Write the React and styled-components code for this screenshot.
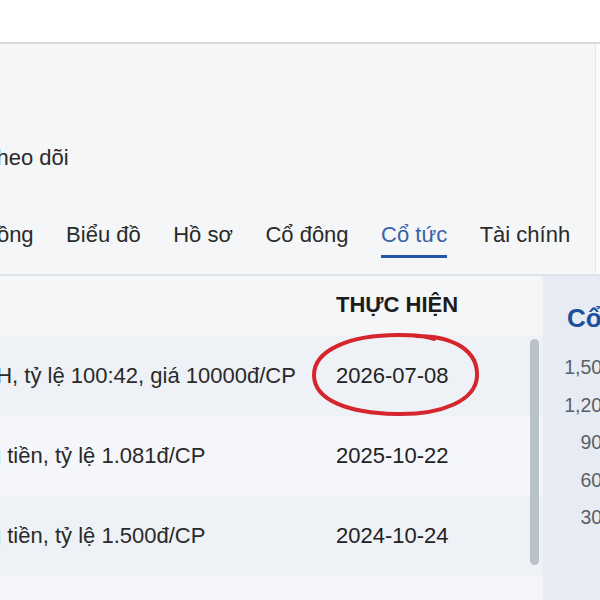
import React from 'react';
import styled, { createGlobalStyle } from 'styled-components';

const tabs = ['Hợp đồng', 'Biểu đồ', 'Hồ sơ', 'Cổ đông', 'Cổ tức', 'Tài chính'];

const rows = [
  { text: 'Quyền CPPH, tỷ lệ 100:42, giá 10000đ/CP', date: '2026-07-08', marked: true },
  { text: 'Cổ tức bằng tiền, tỷ lệ 1.081đ/CP', date: '2025-10-22' },
  { text: 'Cổ tức bằng tiền, tỷ lệ 1.500đ/CP', date: '2024-10-24' },
  { text: 'Cổ tức bằng tiền, tỷ lệ 1.200đ/CP', date: '2023-10-18' },
];

const ticks = ['1,500', '1,200', '900', '600', '300'];

const App = () => {
  return (
    <>
      <GlobalStyle />
      <TopBar />
      <Hero>
        <Follow>Theo dõi</Follow>
        <TabBar>
          {tabs.map((t) => (
            <Tab key={t} $active={t === 'Cổ tức'}>
              {t}
            </Tab>
          ))}
        </TabBar>
      </Hero>
      <Body>
        <Table>
          <HeadRow>
            <HeadCell>NỘI DUNG</HeadCell>
            <HeadCell>THỰC HIỆN</HeadCell>
          </HeadRow>
          {rows.map((r, i) => (
            <Row key={r.date} $odd={i % 2 === 0}>
              <Cell>{r.text}</Cell>
              <DateCell>
                {r.date}
                {r.marked && (
                  <Circle viewBox='0 0 170 86' width='170' height='86'>
                    <path d='M106 4 C146 4 168 20 167 44 C166 69 131 83 86 82 C40 81 4 69 4 43 C4 18 40 3 88 3 C104 3 116 4 124 7' />
                  </Circle>
                )}
              </DateCell>
            </Row>
          ))}
          <Scroll />
        </Table>
        <Panel>
          <PanelTitle>Cổ tức tiền mặt</PanelTitle>
          <Axis>
            {ticks.map((t) => (
              <Tick key={t}>{t}</Tick>
            ))}
          </Axis>
        </Panel>
      </Body>
    </>
  );
};

export default App;

const GlobalStyle = createGlobalStyle`
  body {
    margin: 0;
    background: #f4f6f9;
    font-family: 'Liberation Sans', Arial, sans-serif;
    overflow: hidden;
    color: #222;
  }
`;

const TopBar = styled.header`
  height: 42px;
  background: #fff;
  border-bottom: 2px solid #d8dadd;
`;

const Hero = styled.section`
  padding-top: 99px;
  background: #f5f6f8;
  border-bottom: 2px solid #dfe2e6;
  box-shadow: inset -4px 0 0 #f9fafb, inset -5px 0 0 #e5e7ea;
`;

const Follow = styled.div`
  margin-left: -17px;
  font-size: 22px;
  line-height: 29px;
  color: #2a2a2a;
`;

const TabBar = styled.nav`
  display: flex;
  gap: 32.5px;
  margin: 48px 0 16px -64px;
  white-space: nowrap;
`;

const Tab = styled.div`
  font-size: 22px;
  line-height: 29px;
  padding-bottom: 6px;
  color: ${(p) => (p.$active ? '#3762a6' : '#2a2a2a')};
  border-bottom: 3px solid ${(p) => (p.$active ? '#2256a6' : 'transparent')};
`;

const Body = styled.div`
  display: flex;
`;

const Table = styled.div`
  position: relative;
  width: 679px;
  flex-shrink: 0;
  margin-left: -136px;
`;

const HeadRow = styled.div`
  display: grid;
  grid-template-columns: 456px 1fr;
  height: 60px;
  box-sizing: border-box;
  padding-top: 16px;
  background: #f5f6f8;
`;

const HeadCell = styled.div`
  padding-left: 16px;
  font-size: 22px;
  line-height: 25px;
  font-weight: 700;
  color: #1c1c1c;
`;

const Row = styled.div`
  display: grid;
  grid-template-columns: 456px 1fr;
  height: 80px;
  background: ${(p) => (p.$odd ? '#eef1f5' : '#f4f6f9')};
`;

const Cell = styled.div`
  display: flex;
  align-items: center;
  padding-left: 16px;
  font-size: 22px;
  color: #2a2a2a;
  white-space: nowrap;
`;

const DateCell = styled(Cell)`
  position: relative;
  color: #222;
`;

const Circle = styled.svg`
  position: absolute;
  left: -10px;
  top: -4px;
  fill: none;
  stroke: #d5252d;
  stroke-width: 4;
  stroke-linecap: round;
`;

const Scroll = styled.div`
  position: absolute;
  right: 4px;
  top: 63px;
  width: 9px;
  height: 226px;
  border-radius: 5px;
  background: #b9c1c9;
`;

const Panel = styled.aside`
  flex: 1;
  min-height: 330px;
  padding: 26px 0 0 21px;
  background: #e7ecf4;
  white-space: nowrap;
`;

const PanelTitle = styled.h3`
  margin: 0 0 0 3px;
  font-size: 26px;
  line-height: 32px;
  font-weight: 700;
  color: #1f4f9c;
`;

const Axis = styled.div`
  width: 49px;
  margin-top: 15px;
  text-align: right;
`;

const Tick = styled.div`
  font-size: 19.5px;
  line-height: 37.5px;
  color: #5c5f63;
`;
